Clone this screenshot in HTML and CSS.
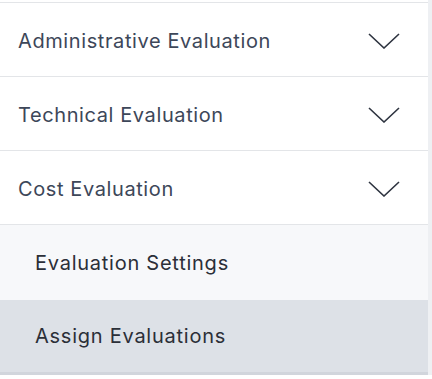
FILE: index.html
```html
<!DOCTYPE html>
<html lang="en">
<head>
    <meta charset="UTF-8">
    <meta name="viewport" content="width=device-width, initial-scale=1.0">
    <title>Evaluation Menu</title>
    <link rel="stylesheet" href="styles.css">
</head>
<body>
    <nav class="menu">
        <div class="menu-item">
            <span>Administrative Evaluation</span>
            <svg class="chevron" viewBox="0 0 32 16"><path d="M1 1 L16 15 L31 1"/></svg>
        </div>
        <div class="menu-item">
            <span>Technical Evaluation</span>
            <svg class="chevron" viewBox="0 0 32 16"><path d="M1 1 L16 15 L31 1"/></svg>
        </div>
        <div class="menu-item">
            <span>Cost Evaluation</span>
            <svg class="chevron" viewBox="0 0 32 16"><path d="M1 1 L16 15 L31 1"/></svg>
        </div>
        <div class="sub-item">Evaluation Settings</div>
        <div class="sub-item active">Assign Evaluations</div>
    </nav>
</body>
</html>
```

FILE: styles.css
```css
/* Page */
body {
    margin: 0;
    padding: 0;
    background-color: #ffffff;
    font-family: 'Inter', 'Noto Sans', sans-serif;
    color: #3d4759;
}

/* Menu container */
.menu {
    width: 428px;
    padding-top: 2px;
    border-right: 4px solid #eef0f3;
}

/* Main rows */
.menu-item {
    display: flex;
    justify-content: space-between;
    align-items: center;
    height: 73px;
    padding: 0 28px 0 18px;
    border-top: 1px solid #e3e5e8;
    font-size: 20px;
    letter-spacing: 0.6px;
}

.menu-item span {
    padding-top: 3px;
}

.chevron {
    width: 32px;
    height: 16px;
    margin-top: 2px;
    fill: none;
    stroke: #2e3440;
    stroke-width: 1.6;
}

/* Sub rows */
.sub-item {
    height: 75px;
    display: flex;
    align-items: center;
    padding-left: 35px;
    background-color: #f7f8fa;
    border-top: 1px solid #e3e5e8;
    font-size: 20px;
    letter-spacing: 0.75px;
    color: #2b2f38;
}

.sub-item.active {
    height: 72px;
    background-color: #dde1e7;
    border-top: none;
    border-bottom: 3px solid #d1d5dc;
}
```
